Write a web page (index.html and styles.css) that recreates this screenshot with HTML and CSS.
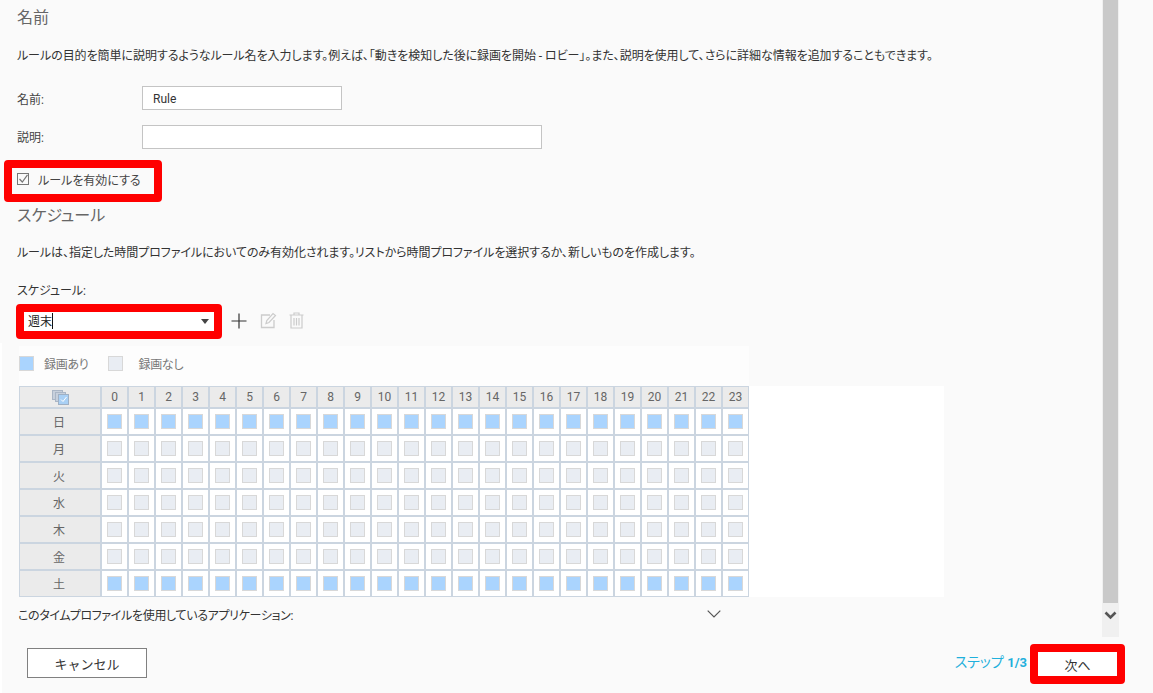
FILE: index.html
```html
<!DOCTYPE html>
<html lang="ja">
<head>
<meta charset="utf-8">
<title>ルール</title>
<link rel="stylesheet" href="styles.css">
</head>
<body>
<div class="page">
  <div class="edge"></div>
  <div class="top">
    <main class="main">
      <h2 class="title first">名前</h2>
      <p class="desc d1">ルールの目的を簡単に説明するようなルール名を入力します。例えば、「動きを検知した後に録画を開始 - ロビー」。また、説明を使用して、さらに詳細な情報を追加することもできます。</p>
      <div class="row r1"><label class="lbl">名前:</label><div class="input w200">Rule</div></div>
      <div class="row r2"><label class="lbl">説明:</label><div class="input w400"></div></div>
      <div class="check">
        <svg class="cb" width="13" height="13" viewBox="0 0 13 13"><rect x="0.5" y="0.5" width="11" height="11" fill="none" stroke="#777"/><path d="M2.5 6 L5.3 9 L10.5 1.8" fill="none" stroke="#777" stroke-width="1.2"/></svg>
        <span>ルールを有効にする</span>
      </div>
      <h2 class="title t2">スケジュール</h2>
      <p class="desc d2">ルールは、指定した時間プロファイルにおいてのみ有効化されます。リストから時間プロファイルを選択するか、新しいものを作成します。</p>
      <div class="sched-label">スケジュール:</div>
      <div class="sched-row">
        <div class="select"><span class="val">週末</span><span class="caret-line"></span><span class="arrow"></span></div>
        <svg class="ic-plus" width="16" height="16" viewBox="0 0 16 16"><path d="M8 0.5V15.5M0.5 8H15.5" stroke="#333" stroke-width="1.2" fill="none"/></svg>
        <svg class="ic-edit" width="17" height="17" viewBox="0 0 17 17"><path d="M10 3H1.5V15.5H14V8" fill="none" stroke="#ccc" stroke-width="1.3"/><path d="M6 11.5L6.8 8.5L13 1.5L15.5 3.5L9 10.5Z" fill="none" stroke="#ccc" stroke-width="1.2"/></svg>
        <svg class="ic-trash" width="15" height="17" viewBox="0 0 15 17"><path d="M0.5 3H14.5M5 3V1H10V3M2 3V16H13V3M5 6V13.5M7.5 6V13.5M10 6V13.5" fill="none" stroke="#ccc" stroke-width="1.2"/></svg>
      </div>
      <div class="legend">
        <span class="sw on"></span><span class="lg-t">録画あり</span>
        <span class="sw off s2"></span><span class="lg-t">録画なし</span>
      </div>
      <div class="grid-wrap">
        <div class="grid">
          <div class="hd corner"><svg width="17" height="15" viewBox="0 0 17 15"><rect x="0.5" y="0.5" width="10" height="9" fill="#c7d0dc" stroke="#aab6c6"/><rect x="3.5" y="2.5" width="10" height="9" fill="#c7d0dc" stroke="#aab6c6"/><rect x="6.5" y="4.5" width="10" height="10" fill="#a9d0f5" stroke="#9fb0c4"/><path d="M9 9.5L11 11.5L14.5 7" fill="none" stroke="#fff"/></svg></div>
          <div class="hd">0</div><div class="hd">1</div><div class="hd">2</div><div class="hd">3</div><div class="hd">4</div><div class="hd">5</div><div class="hd">6</div><div class="hd">7</div><div class="hd">8</div><div class="hd">9</div><div class="hd">10</div><div class="hd">11</div><div class="hd">12</div><div class="hd">13</div><div class="hd">14</div><div class="hd">15</div><div class="hd">16</div><div class="hd">17</div><div class="hd">18</div><div class="hd">19</div><div class="hd">20</div><div class="hd">21</div><div class="hd">22</div><div class="hd">23</div>
          <div class="hd day">日</div>
          <div class="c"><i class="on"></i></div><div class="c"><i class="on"></i></div><div class="c"><i class="on"></i></div><div class="c"><i class="on"></i></div><div class="c"><i class="on"></i></div><div class="c"><i class="on"></i></div><div class="c"><i class="on"></i></div><div class="c"><i class="on"></i></div><div class="c"><i class="on"></i></div><div class="c"><i class="on"></i></div><div class="c"><i class="on"></i></div><div class="c"><i class="on"></i></div><div class="c"><i class="on"></i></div><div class="c"><i class="on"></i></div><div class="c"><i class="on"></i></div><div class="c"><i class="on"></i></div><div class="c"><i class="on"></i></div><div class="c"><i class="on"></i></div><div class="c"><i class="on"></i></div><div class="c"><i class="on"></i></div><div class="c"><i class="on"></i></div><div class="c"><i class="on"></i></div><div class="c"><i class="on"></i></div><div class="c"><i class="on"></i></div>
          <div class="hd day">月</div>
          <div class="c"><i class="off"></i></div><div class="c"><i class="off"></i></div><div class="c"><i class="off"></i></div><div class="c"><i class="off"></i></div><div class="c"><i class="off"></i></div><div class="c"><i class="off"></i></div><div class="c"><i class="off"></i></div><div class="c"><i class="off"></i></div><div class="c"><i class="off"></i></div><div class="c"><i class="off"></i></div><div class="c"><i class="off"></i></div><div class="c"><i class="off"></i></div><div class="c"><i class="off"></i></div><div class="c"><i class="off"></i></div><div class="c"><i class="off"></i></div><div class="c"><i class="off"></i></div><div class="c"><i class="off"></i></div><div class="c"><i class="off"></i></div><div class="c"><i class="off"></i></div><div class="c"><i class="off"></i></div><div class="c"><i class="off"></i></div><div class="c"><i class="off"></i></div><div class="c"><i class="off"></i></div><div class="c"><i class="off"></i></div>
          <div class="hd day">火</div>
          <div class="c"><i class="off"></i></div><div class="c"><i class="off"></i></div><div class="c"><i class="off"></i></div><div class="c"><i class="off"></i></div><div class="c"><i class="off"></i></div><div class="c"><i class="off"></i></div><div class="c"><i class="off"></i></div><div class="c"><i class="off"></i></div><div class="c"><i class="off"></i></div><div class="c"><i class="off"></i></div><div class="c"><i class="off"></i></div><div class="c"><i class="off"></i></div><div class="c"><i class="off"></i></div><div class="c"><i class="off"></i></div><div class="c"><i class="off"></i></div><div class="c"><i class="off"></i></div><div class="c"><i class="off"></i></div><div class="c"><i class="off"></i></div><div class="c"><i class="off"></i></div><div class="c"><i class="off"></i></div><div class="c"><i class="off"></i></div><div class="c"><i class="off"></i></div><div class="c"><i class="off"></i></div><div class="c"><i class="off"></i></div>
          <div class="hd day">水</div>
          <div class="c"><i class="off"></i></div><div class="c"><i class="off"></i></div><div class="c"><i class="off"></i></div><div class="c"><i class="off"></i></div><div class="c"><i class="off"></i></div><div class="c"><i class="off"></i></div><div class="c"><i class="off"></i></div><div class="c"><i class="off"></i></div><div class="c"><i class="off"></i></div><div class="c"><i class="off"></i></div><div class="c"><i class="off"></i></div><div class="c"><i class="off"></i></div><div class="c"><i class="off"></i></div><div class="c"><i class="off"></i></div><div class="c"><i class="off"></i></div><div class="c"><i class="off"></i></div><div class="c"><i class="off"></i></div><div class="c"><i class="off"></i></div><div class="c"><i class="off"></i></div><div class="c"><i class="off"></i></div><div class="c"><i class="off"></i></div><div class="c"><i class="off"></i></div><div class="c"><i class="off"></i></div><div class="c"><i class="off"></i></div>
          <div class="hd day">木</div>
          <div class="c"><i class="off"></i></div><div class="c"><i class="off"></i></div><div class="c"><i class="off"></i></div><div class="c"><i class="off"></i></div><div class="c"><i class="off"></i></div><div class="c"><i class="off"></i></div><div class="c"><i class="off"></i></div><div class="c"><i class="off"></i></div><div class="c"><i class="off"></i></div><div class="c"><i class="off"></i></div><div class="c"><i class="off"></i></div><div class="c"><i class="off"></i></div><div class="c"><i class="off"></i></div><div class="c"><i class="off"></i></div><div class="c"><i class="off"></i></div><div class="c"><i class="off"></i></div><div class="c"><i class="off"></i></div><div class="c"><i class="off"></i></div><div class="c"><i class="off"></i></div><div class="c"><i class="off"></i></div><div class="c"><i class="off"></i></div><div class="c"><i class="off"></i></div><div class="c"><i class="off"></i></div><div class="c"><i class="off"></i></div>
          <div class="hd day">金</div>
          <div class="c"><i class="off"></i></div><div class="c"><i class="off"></i></div><div class="c"><i class="off"></i></div><div class="c"><i class="off"></i></div><div class="c"><i class="off"></i></div><div class="c"><i class="off"></i></div><div class="c"><i class="off"></i></div><div class="c"><i class="off"></i></div><div class="c"><i class="off"></i></div><div class="c"><i class="off"></i></div><div class="c"><i class="off"></i></div><div class="c"><i class="off"></i></div><div class="c"><i class="off"></i></div><div class="c"><i class="off"></i></div><div class="c"><i class="off"></i></div><div class="c"><i class="off"></i></div><div class="c"><i class="off"></i></div><div class="c"><i class="off"></i></div><div class="c"><i class="off"></i></div><div class="c"><i class="off"></i></div><div class="c"><i class="off"></i></div><div class="c"><i class="off"></i></div><div class="c"><i class="off"></i></div><div class="c"><i class="off"></i></div>
          <div class="hd day">土</div>
          <div class="c"><i class="on"></i></div><div class="c"><i class="on"></i></div><div class="c"><i class="on"></i></div><div class="c"><i class="on"></i></div><div class="c"><i class="on"></i></div><div class="c"><i class="on"></i></div><div class="c"><i class="on"></i></div><div class="c"><i class="on"></i></div><div class="c"><i class="on"></i></div><div class="c"><i class="on"></i></div><div class="c"><i class="on"></i></div><div class="c"><i class="on"></i></div><div class="c"><i class="on"></i></div><div class="c"><i class="on"></i></div><div class="c"><i class="on"></i></div><div class="c"><i class="on"></i></div><div class="c"><i class="on"></i></div><div class="c"><i class="on"></i></div><div class="c"><i class="on"></i></div><div class="c"><i class="on"></i></div><div class="c"><i class="on"></i></div><div class="c"><i class="on"></i></div><div class="c"><i class="on"></i></div><div class="c"><i class="on"></i></div>
        </div>
      </div>
      <div class="apps">
        <span>このタイムプロファイルを使用しているアプリケーション:</span>
        <svg width="14" height="8" viewBox="0 0 14 8"><path d="M0.7 0.7L7 7L13.3 0.7" fill="none" stroke="#555" stroke-width="1.2"/></svg>
      </div>
    </main>
    <div class="scrollbar">
      <div class="thumb"></div>
      <svg class="sb-arrow" width="13" height="9" viewBox="0 0 13 9"><path d="M1.5 1.5L6.5 6.5L11.5 1.5" fill="none" stroke="#555" stroke-width="2.6"/></svg>
    </div>
  </div>
  <footer class="footer">
    <button class="btn cancel" type="button">キャンセル</button>
    <div class="right">
      <span class="step">ステップ <b>1/3</b></span>
      <button class="btn next" type="button">次へ</button>
    </div>
  </footer>
  <div class="mark m1"></div>
  <div class="mark m2"></div>
  <div class="mark m3"></div>
</div>
</body>
</html>
```
FILE: styles.css
```css
* { box-sizing: border-box; }
html, body { margin: 0; padding: 0; height: 100%; overflow: hidden; }
body {
  background: #fafafa;
  color: #333;
  font-family: Roboto, "Noto Sans CJK JP", sans-serif;
  font-size: 12px;
  font-feature-settings: "palt";
}
.page { position: relative; width: 1153px; height: 693px; display: flex; flex-direction: column; }
.edge { position: absolute; left: 0; top: 343px; bottom: 0; width: 2px; background: #fff; }
.top { display: flex; height: 637px; }
.main { flex: 1; padding-left: 17px; min-width: 0; }
.title { margin: 0; font-size: 16px; line-height: 20px; font-weight: 400; color: #666; }
.title.first { margin-top: 8px; }
.title.t2 { margin-top: 17px; }
.desc { margin: 19px 0 0; line-height: 16px; white-space: nowrap; color: #333; }
.d1 { margin-top: 20px; letter-spacing: -0.05px; }
.d2 { letter-spacing: -0.065px; }
.row { display: flex; height: 24px; align-items: center; }
.row.r1 { margin-top: 22px; }
.row.r2 { margin-top: 15px; }
.r2 .lbl { padding-bottom: 2px; }
.lbl { width: 125px; color: #444; }
.input { height: 24px; border: 1px solid #c4c4c4; background: #fff; padding-left: 10px; line-height: 24px; color: #333; }
.w200 { width: 200px; }
.w400 { width: 400px; }
.check { display: flex; align-items: center; height: 20px; margin-top: 20px; color: #444; }
.cb { margin-right: 8px; }
.sched-label { margin-top: 22px; line-height: 16px; }
.sched-row { display: flex; align-items: flex-start; height: 20px; margin-top: 13px; }
.select { position: relative; margin-left: 6px; width: 192px; height: 20px; background: #fff; display: flex; align-items: center; padding: 0 0 3px 5px; font-size: 12px; color: #222; font-feature-settings: normal; }
.caret-line { width: 1px; height: 16px; background: #111; }
.arrow { position: absolute; right: 6px; top: 7px; width: 0; height: 0; border-left: 4px solid transparent; border-right: 4px solid transparent; border-top: 5px solid #444; }
.ic-plus { margin: 1px 0 0 16px; }
.ic-edit { margin-left: 13px; }
.ic-trash { margin-left: 12px; }
.legend { margin: 14px 0 0 2px; width: 730px; height: 40px; background: #fdfdfd; display: flex; align-items: center; padding-bottom: 5px; }
.sw { width: 15px; height: 15px; border: 1px solid #d8d8d8; }
.on { background: #aad4fe; }
.off { background: #e9edf3; }
.lg-t { margin-left: 10px; color: #777; letter-spacing: -0.3px; }
.s2 { margin-left: 20px; }
.s2 + .lg-t { margin-left: 15px; }
.grid-wrap { margin-left: 2px; width: 925px; height: 211px; background: #fff; }
.grid {
  display: grid;
  width: 730px;
  grid-template-columns: 80px repeat(24, 25px);
  grid-template-rows: 20px repeat(7, 25px);
  gap: 2px;
  border: 1px solid #cbd5e0;
  background: #cbd5e0;
}
.hd { background: #ebebeb; color: #666; display: flex; align-items: center; justify-content: center; font-size: 12px; }
.day { padding-right: 2px; }
.c { background: #fff; display: flex; align-items: center; justify-content: center; }
.c i { display: block; width: 15px; height: 15px; border: 1px solid #d8d8d8; }
.apps { display: flex; align-items: center; justify-content: space-between; margin-left: 1px; width: 703px; height: 36px; color: #333; padding-bottom: 2px; letter-spacing: -0.33px; }
.scrollbar { position: relative; width: 17px; height: 637px; margin-right: 34px; background: #f0f0f0; }
.thumb { width: 15px; height: 603px; margin-left: 1px; background: #c9c9c9; }
.sb-arrow { position: absolute; left: 2px; top: 611px; }
.footer { display: flex; justify-content: space-between; padding: 11px 36px 0 27px; height: 56px; }
.btn { font-family: inherit; font-size: 13px; color: #333; background: #fff; padding: 0; }
.cancel { width: 120px; height: 30px; border: 1px solid #808080; }
.right { display: flex; align-items: flex-start; }
.step { margin: 6px 11px 0 0; line-height: 16px; color: #1fb0dc; font-size: 14px; }
.step b { font-weight: 700; font-size: 13px; }
.next { width: 79px; height: 24px; margin-top: 4px; border: 0; }
.mark { position: absolute; border: 8px solid #f00; border-radius: 4px; pointer-events: none; }
.m1 { left: 4px; top: 160px; width: 158px; height: 42px; }
.m2 { left: 16px; top: 304px; width: 206px; height: 35px; }
.m3 { left: 1030px; top: 644px; width: 95px; height: 40px; }
```
